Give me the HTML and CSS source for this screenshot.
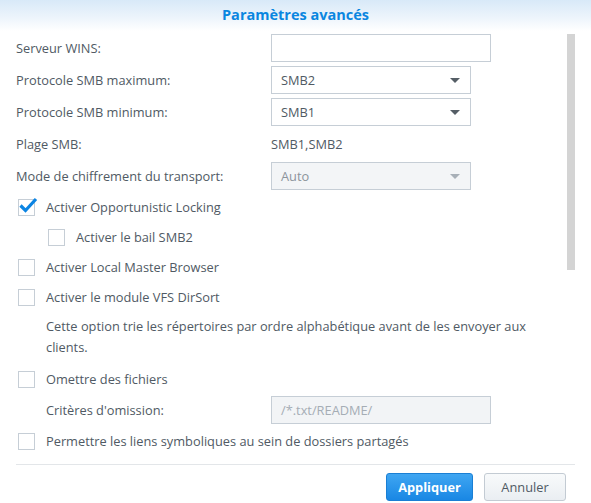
FILE: index.html
```html
<!DOCTYPE html>
<html lang="fr">
<head>
<meta charset="utf-8">
<title>Paramètres avancés</title>
<link rel="stylesheet" href="styles.css">
</head>
<body>
<div class="dialog">
  <div class="header">Paramètres avancés</div>
  <div class="body">
    <div class="form">
      <div class="row field-row">
        <label class="label">Serveur WINS:</label>
        <div class="input wide"></div>
      </div>
      <div class="row field-row">
        <label class="label">Protocole SMB maximum:</label>
        <div class="select"><span>SMB2</span><span class="arrow"></span></div>
      </div>
      <div class="row field-row">
        <label class="label">Protocole SMB minimum:</label>
        <div class="select"><span>SMB1</span><span class="arrow"></span></div>
      </div>
      <div class="row field-row">
        <label class="label">Plage SMB:</label>
        <div class="value">SMB1,SMB2</div>
      </div>
      <div class="row field-row">
        <label class="label">Mode de chiffrement du transport:</label>
        <div class="select disabled"><span>Auto</span><span class="arrow"></span></div>
      </div>
      <div class="row check-row">
        <span class="box checked"><svg viewBox="0 0 20 20" width="20" height="20"><path d="M2.5 9.5 L7.5 14.5 L18 3" fill="none" stroke="#0b84e3" stroke-width="3.2"/></svg></span>
        <span class="check-text">Activer Opportunistic Locking</span>
      </div>
      <div class="row check-row nested">
        <span class="box"></span>
        <span class="check-text">Activer le bail SMB2</span>
      </div>
      <div class="row check-row">
        <span class="box"></span>
        <span class="check-text">Activer Local Master Browser</span>
      </div>
      <div class="row check-row">
        <span class="box"></span>
        <span class="check-text">Activer le module VFS DirSort</span>
      </div>
      <p class="desc">Cette option trie les répertoires par ordre alphabétique avant de les envoyer aux clients.</p>
      <div class="row check-row">
        <span class="box"></span>
        <span class="check-text">Omettre des fichiers</span>
      </div>
      <div class="row field-row">
        <label class="label sub">Critères d'omission:</label>
        <div class="input wide disabled"><span>/*.txt/README/</span></div>
      </div>
      <div class="row check-row">
        <span class="box"></span>
        <span class="check-text">Permettre les liens symboliques au sein de dossiers partagés</span>
      </div>
    </div>
    <div class="scroll-track"><div class="scroll-thumb"></div></div>
  </div>
  <div class="footer">
    <button class="btn primary">Appliquer</button>
    <button class="btn">Annuler</button>
  </div>
</div>
</body>
</html>
```

FILE: styles.css
```css
* { box-sizing: border-box; }
html, body { margin: 0; padding: 0; }
body {
  width: 591px;
  height: 503px;
  overflow: hidden;
  background: #ffffff;
  font-family: "Open Sans", "Noto Sans", sans-serif;
  font-size: 12.8px;
  color: #505a64;
}
.dialog {
  display: flex;
  flex-direction: column;
  height: 503px;
}
.header {
  height: 31px;
  padding-top: 5px;
  text-align: center;
  font-weight: bold;
  font-size: 14.5px;
  color: #0a86e0;
  background: linear-gradient(to bottom, #d8e9f8 0%, #eef5fc 60%, #ffffff 100%);
}
.body {
  display: flex;
  padding: 3px 16px 0 16px;
  height: 433px;
}
.form {
  flex: 1;
  display: flex;
  flex-direction: column;
  gap: 4px;
}
.row {
  display: flex;
  align-items: center;
}
.field-row { height: 28px; }
.check-row { height: 26px; padding-left: 2px; }
.check-row.nested { padding-left: 32px; }
.label { width: 255px; flex: none; }
.label.sub { padding-left: 30px; }
.input, .select {
  height: 28px;
  border: 1px solid #c6ced6;
  background: #fff;
  display: flex;
  align-items: center;
  padding: 0 9px;
}
.input.wide { width: 220px; }
.input.disabled { background: #f2f4f6; color: #a5adb5; }
.select {
  width: 200px;
  justify-content: space-between;
  color: #505a64;
}
.select.disabled { background: #f3f5f7; color: #8c949c; }
.arrow {
  width: 0; height: 0;
  border-left: 5px solid transparent;
  border-right: 5px solid transparent;
  border-top: 5px solid #555e66;
  margin-right: 1px;
}
.select.disabled .arrow { border-top-color: #a8b0b8; }
.value { color: #505a64; }
.box {
  width: 17px;
  height: 17px;
  border: 1px solid #c6ced6;
  background: #fff;
  flex: none;
  margin-right: 11px;
  position: relative;
}
.box.checked svg {
  position: absolute;
  left: -1px;
  top: -4px;
}
.desc {
  margin: 0 0 0 30px;
  line-height: 21px;
  max-width: 500px;
  padding: 2px 0 4px;
}
.scroll-track {
  width: 8px;
  flex: none;
}
.scroll-thumb {
  margin-top: 0;
  height: 236px;
  background: #d4d4d4;
}
.footer {
  margin: 0 16px;
  border-top: 1px solid #e3e6e9;
  display: flex;
  justify-content: flex-end;
  gap: 11px;
  padding: 8px 9px 0 0;
}
.btn {
  height: 28px;
  font-family: inherit;
  font-size: 12.8px;
  border-radius: 3px;
  border: 1px solid #c3cbd3;
  background: linear-gradient(to bottom, #f8fafb, #eaeef2);
  color: #505a64;
  width: 82px;
  padding: 0;
}
.btn.primary {
  width: 87px;
  font-weight: bold;
  color: #ffffff;
  border-color: #1a7fd4;
  background: linear-gradient(to bottom, #3fa6f2, #1987e4);
}
```
